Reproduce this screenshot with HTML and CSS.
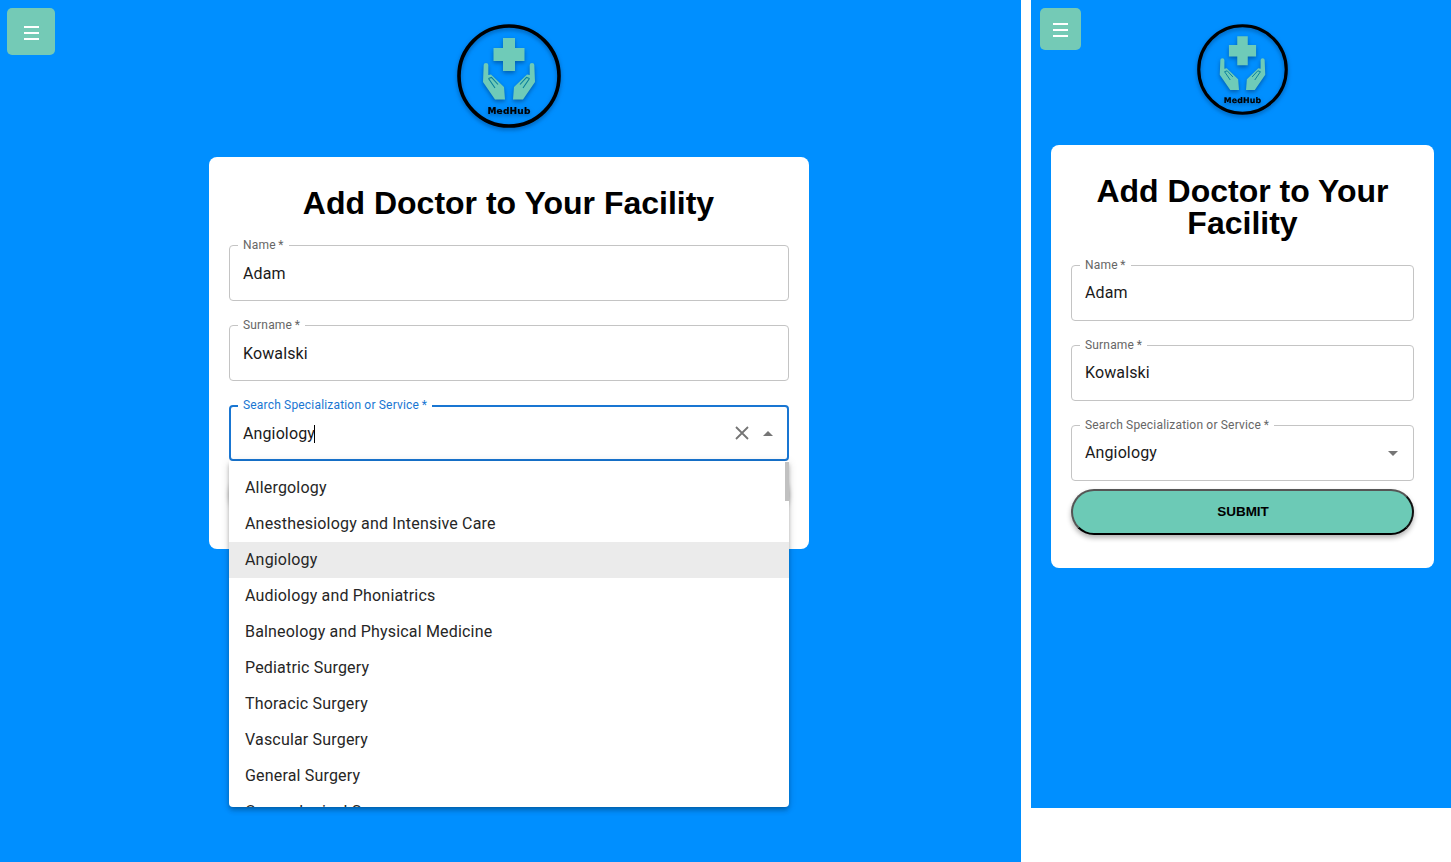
FILE: index.html
```html
<!DOCTYPE html>
<html lang="en">
<head>
<meta charset="utf-8">
<title>MedHub</title>
<link rel="stylesheet" href="styles.css">
</head>
<body>
<div class="desktop">
  <section class="pane pane-wide">
    <button class="burger burger-wide" type="button" aria-label="Menu">
      <svg class="burger-icon" viewBox="0 0 15 14"><path d="M0 2h15M0 8h15M0 14h15"/></svg>
    </button>
    <svg class="logo logo-wide" viewBox="0 0 104 104">
      <circle cx="52" cy="52" r="50" class="logo-ring"/>
      <path d="M46 14h12v10h9.500v13H58v10H46V37H36.500V24H46z" class="logo-mint"/>
      <path d="M26.700 41Q26.700 39 29 39Q31.300 39 31.300 41L31.300 51L34 50.500L47 63L48 75.500L38 75.500L26 58Z" class="logo-mint"/>
      <path d="M31.500 54.500L34.500 53.500L41 60.500M31.500 54.500L38 64" class="logo-crease"/>
      <path d="M77.300 41Q77.300 39 75 39Q72.700 39 72.700 41L72.700 51L70 50.500L57 63L56 75.500L66 75.500L78 58Z" class="logo-mint"/>
      <path d="M72.500 54.500L69.500 53.500L63 60.500M72.500 54.500L66 64" class="logo-crease"/>
      <text x="52" y="90.300" class="logo-word">MedHub</text>
    </svg>
    <form class="card">
      <h1 class="title">Add Doctor to Your Facility</h1>
      <div class="field">
        <span class="field-label">Name&thinsp;*</span>
        <span class="field-value">Adam</span>
      </div>
      <div class="field">
        <span class="field-label">Surname&thinsp;*</span>
        <span class="field-value">Kowalski</span>
      </div>
      <div class="field field-focus">
        <span class="field-label">Search Specialization or Service&thinsp;*</span>
        <span class="field-value">Angiology<i class="caret"></i></span>
        <svg class="clear" viewBox="0 0 14 14"><path d="M1 1l12 12M13 1L1 13"/></svg>
        <svg class="arrow" viewBox="0 0 10 5"><path d="M0 5L5 0l5 5z"/></svg>
        <ul class="menu">
          <li>Allergology</li>
          <li>Anesthesiology and Intensive Care</li>
          <li class="menu-active">Angiology</li>
          <li>Audiology and Phoniatrics</li>
          <li>Balneology and Physical Medicine</li>
          <li>Pediatric Surgery</li>
          <li>Thoracic Surgery</li>
          <li>Vascular Surgery</li>
          <li>General Surgery</li>
          <li>Gynecological Surgery</li>
        </ul>
        <span class="scroll-thumb"></span>
      </div>
      <button class="submit" type="button">Submit</button>
    </form>
  </section>

  <section class="pane pane-narrow">
    <button class="burger burger-narrow" type="button" aria-label="Menu">
      <svg class="burger-icon" viewBox="0 0 15 14"><path d="M0 2h15M0 8h15M0 14h15"/></svg>
    </button>
    <svg class="logo logo-narrow" viewBox="0 0 104 104">
      <circle cx="52" cy="52" r="50" class="logo-ring"/>
      <path d="M46 14h12v10h9.500v13H58v10H46V37H36.500V24H46z" class="logo-mint"/>
      <path d="M26.700 41Q26.700 39 29 39Q31.300 39 31.300 41L31.300 51L34 50.500L47 63L48 75.500L38 75.500L26 58Z" class="logo-mint"/>
      <path d="M31.500 54.500L34.500 53.500L41 60.500M31.500 54.500L38 64" class="logo-crease"/>
      <path d="M77.300 41Q77.300 39 75 39Q72.700 39 72.700 41L72.700 51L70 50.500L57 63L56 75.500L66 75.500L78 58Z" class="logo-mint"/>
      <path d="M72.500 54.500L69.500 53.500L63 60.500M72.500 54.500L66 64" class="logo-crease"/>
      <text x="52" y="90.300" class="logo-word">MedHub</text>
    </svg>
    <form class="card">
      <h1 class="title">Add Doctor to Your Facility</h1>
      <div class="field">
        <span class="field-label">Name&thinsp;*</span>
        <span class="field-value">Adam</span>
      </div>
      <div class="field">
        <span class="field-label">Surname&thinsp;*</span>
        <span class="field-value">Kowalski</span>
      </div>
      <div class="field">
        <span class="field-label">Search Specialization or Service&thinsp;*</span>
        <span class="field-value">Angiology</span>
        <svg class="arrow arrow-down" viewBox="0 0 10 5"><path d="M0 0l5 5 5-5z"/></svg>
      </div>
      <button class="submit" type="button">Submit</button>
    </form>
  </section>
</div>
</body>
</html>
```

FILE: styles.css
```css
* { box-sizing: border-box; }

html, body { margin: 0; padding: 0; background: #fff; overflow: hidden; }

body { font-family: Roboto, "Liberation Sans", sans-serif; color: #1a1a1a; }

.desktop { display: flex; align-items: flex-start; gap: 10px; }

.pane {
  position: relative;
  display: flex;
  flex-direction: column;
  align-items: center;
  background: #008fff;
  overflow: hidden;
}

.pane-wide { width: 1021px; height: 862px; padding: 24px 3px 0 0; }
.pane-narrow { width: 420px; height: 808px; padding: 24px 17px 0 20px; }

.burger {
  position: absolute;
  top: 8px;
  display: flex;
  align-items: center;
  justify-content: center;
  border: 0;
  border-radius: 5px;
  background: #74cab6;
  padding: 0;
}
.burger-wide { left: 7px; width: 48px; height: 47px; padding-top: 1px; }
.burger-narrow { left: 9px; width: 41px; height: 42px; }

.burger-icon { width: 15px; height: 14px; fill: none; stroke: #fff; stroke-width: 2; overflow: visible; }

.logo { display: block; flex: none; overflow: visible; filter: drop-shadow(0 2.500px 2px rgba(0, 60, 120, .6)) blur(.35px); }
.logo-wide { width: 104px; height: 104px; margin-bottom: 29px; }
.logo-narrow { width: 91px; height: 91px; margin-bottom: 30px; }
.logo-ring { fill: none; stroke: #000; stroke-width: 3.600; }
.logo-mint { fill: #6fcbb8; }
.logo-crease { fill: none; stroke: #0a7f9c; stroke-width: 1.100; }
.logo-word { font: 700 9px "DejaVu Sans", sans-serif; letter-spacing: .2px; text-anchor: middle; fill: #000; stroke: #000; stroke-width: .2px; }

.card {
  width: 600px;
  max-width: 100%;
  flex: none;
  background: #fff;
  border-radius: 8px;
  padding: 30px 20px 34px;
}
.pane-narrow .card { padding-bottom: 33px; }

.title {
  margin: 0 0 26px;
  font: 700 32px/32px "Liberation Sans", Arial, sans-serif;
  color: #000;
  text-align: center;
}
.pane-wide .title { padding-right: 1px; }

.field {
  position: relative;
  display: flex;
  align-items: center;
  height: 56px;
  margin-bottom: 24px;
  padding: 0 13px;
  border: 1px solid #c4c4c4;
  border-radius: 4px;
}
.field:nth-of-type(3) { margin-bottom: 8px; }

.field-label {
  position: absolute;
  top: -8px;
  left: 8px;
  padding: 0 5px;
  background: #fff;
  font-size: 12px;
  line-height: 14px;
  letter-spacing: .18px;
  color: #666;
}

.field-value { font-size: 16px; line-height: 24px; letter-spacing: .12px; color: #1a1a1a; }
.pane-wide .field-value { padding-top: 2px; }

.field-focus { border: 2px solid #1976d2; padding: 0 12px; }
.field-focus .field-label { top: -9px; left: 7px; color: #1976d2; }

.caret { display: inline-block; width: 1px; height: 18px; margin-left: -1px; background: #000; vertical-align: -4px; }

.clear {
  position: absolute;
  top: 19px;
  right: 38px;
  width: 14px;
  height: 14px;
  fill: none;
  stroke: #757575;
  stroke-width: 1.800;
}

.arrow { position: absolute; top: 24px; right: 14px; width: 10px; height: 5px; fill: #757575; }
.arrow-down { top: 25px; right: 15px; }

.menu {
  position: absolute;
  top: 54px;
  left: -2px;
  right: -2px;
  z-index: 5;
  height: 346px;
  margin: 0;
  padding: 9px 0 0;
  list-style: none;
  overflow: hidden;
  background: #fff;
  border-radius: 0 0 4px 4px;
  box-shadow: 0 2px 4px -1px rgba(0,0,0,.2), 0 4px 5px rgba(0,0,0,.14), 0 1px 10px rgba(0,0,0,.12);
}
.menu li {
  height: 36px;
  padding: 0 16px;
  font-size: 16px;
  line-height: 36px;
  letter-spacing: .18px;
  color: #262626;
}
.menu .menu-active { background: #ebebeb; }

.scroll-thumb {
  position: absolute;
  z-index: 6;
  top: 55px;
  right: -2px;
  width: 4px;
  height: 39px;
  background: #c1c1c1;
}

.submit {
  display: block;
  width: 100%;
  height: 46px;
  padding: 0 0 1px 1px;
  border: 2px solid;
  border-color: #555 #111 #000 #555;
  border-radius: 23px;
  background: #6ccab6;
  box-shadow: 0 3px 5px rgba(0,0,0,.3);
  font: 700 13.500px/1 "Liberation Sans", Arial, sans-serif;
  text-transform: uppercase;
  color: #000;
}
```
